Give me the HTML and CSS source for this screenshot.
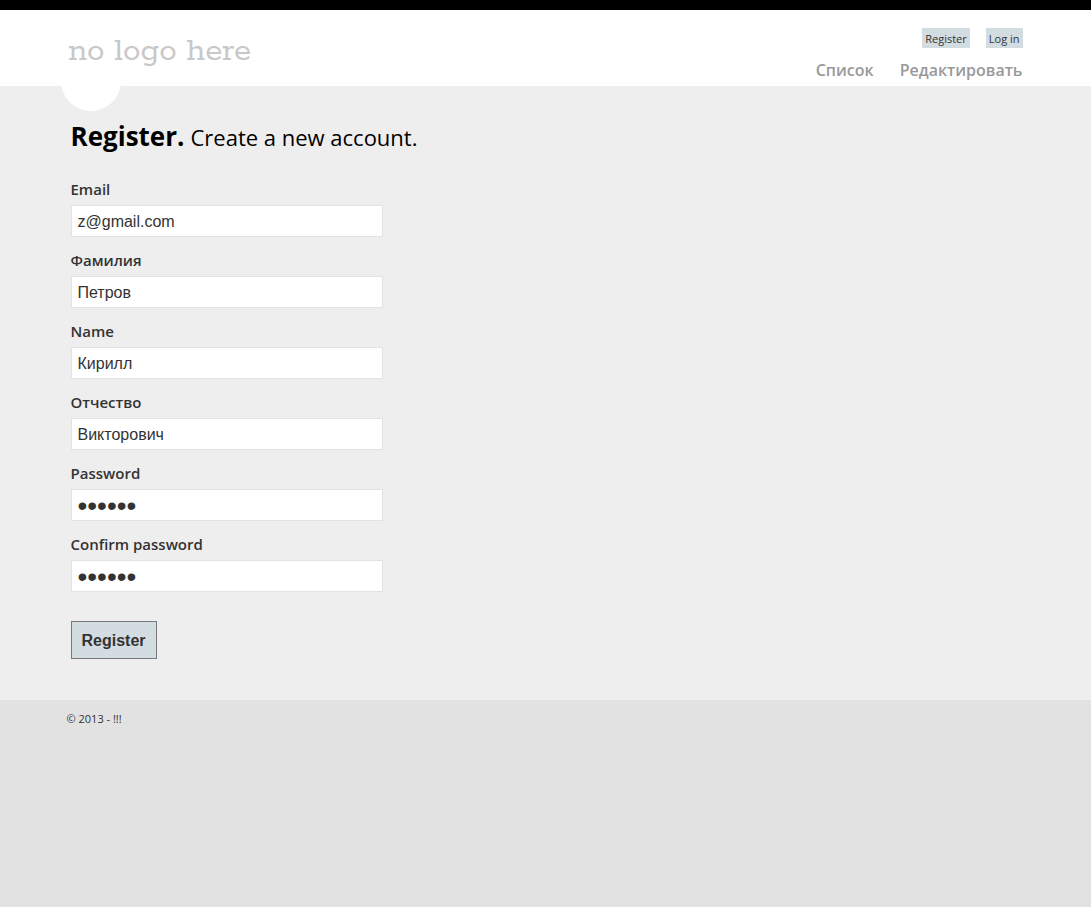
FILE: index.html
```html
<!DOCTYPE html>
<html lang="en">
<head>
<meta charset="utf-8">
<meta name="viewport" content="width=device-width, initial-scale=1">
<title>Register</title>
<link rel="stylesheet" href="styles.css">
</head>
<body>
<header class="site-header">
  <div class="wrapper header-row">
    <a class="logo" href="#">no logo here</a>
    <div class="header-side">
      <nav class="account" aria-label="Account">
        <a class="account-link" href="#">Register</a>
        <a class="account-link" href="#">Log in</a>
      </nav>
      <nav class="menu" aria-label="Main">
        <a class="menu-link" href="#">Список</a>
        <a class="menu-link" href="#">Редактировать</a>
      </nav>
    </div>
  </div>
</header>
<main class="main">
  <div class="wrapper">
    <div class="title">
      <h1 class="title-name">Register.</h1>
      <h2 class="title-note">Create a new account.</h2>
    </div>
    <form class="form">
      <div class="field">
        <label class="label" for="email">Email</label>
        <input class="input" id="email" type="text" value="z@gmail.com">
      </div>
      <div class="field">
        <label class="label" for="surname">Фамилия</label>
        <input class="input" id="surname" type="text" value="Петров">
      </div>
      <div class="field">
        <label class="label" for="name">Name</label>
        <input class="input" id="name" type="text" value="Кирилл">
      </div>
      <div class="field">
        <label class="label" for="patronymic">Отчество</label>
        <input class="input" id="patronymic" type="text" value="Викторович">
      </div>
      <div class="field">
        <label class="label" for="password">Password</label>
        <input class="input input-password" id="password" type="password" value="secret">
      </div>
      <div class="field">
        <label class="label" for="confirm">Confirm password</label>
        <input class="input input-password" id="confirm" type="password" value="secret">
      </div>
      <button class="submit" type="submit">Register</button>
    </form>
  </div>
</main>
<footer class="footer">
  <div class="wrapper"><p class="copyright">© 2013 - !!!</p></div>
</footer>
</body>
</html>
```

FILE: styles.css
```css
* {
  box-sizing: border-box;
}

body {
  margin: 0;
  border-top: 10px solid #000;
  background: #e2e2e2;
  color: #333;
  font-family: "Segoe UI", "Open Sans", "Noto Sans", sans-serif;
}

a {
  text-decoration: none;
}

.wrapper {
  max-width: 960px;
  margin: 0 auto;
}

.site-header {
  background: #fff;
}

.header-row {
  position: relative;
  display: flex;
  justify-content: space-between;
  padding: 18px 3px 4px;
}

/* Round tab that hangs below the header */
.header-row::after {
  content: "";
  position: absolute;
  left: -5px;
  bottom: -25px;
  width: 60px;
  height: 60px;
  border-radius: 50%;
  background: #fff;
}

.logo {
  position: relative;
  z-index: 1;
  padding-top: 5px;
  color: #c8c8c8;
  font-family: Rokkitt, "DejaVu Serif", serif;
  font-size: 35px;
  font-weight: 400;
  line-height: 36px;
}

.header-side {
  display: flex;
  flex-direction: column;
  align-items: flex-end;
  gap: 10px;
}

.account {
  display: flex;
  gap: 16px;
}

.account-link {
  padding: 1px 3px 0;
  background: #d3dce0;
  color: #333;
  font-size: 11px;
  line-height: 19px;
}

.menu {
  display: flex;
  gap: 26px;
}

.menu-link {
  color: #999;
  font-size: 16px;
  font-weight: 600;
  line-height: 24px;
}

.main {
  padding: 31px 5px 41px;
  background: #eee;
}

.title {
  display: flex;
  flex-wrap: wrap;
  align-items: baseline;
  gap: 6px;
  margin-bottom: 22px;
  padding-left: 5px;
  color: #000;
}

.title-name {
  margin: 0;
  font-size: 26px;
  font-weight: 700;
  line-height: 38px;
}

.title-note {
  margin: 0;
  font-size: 22px;
  font-weight: 400;
  line-height: 38px;
}

.form {
  padding-left: 5px;
}

.field {
  display: flex;
  flex-direction: column;
  gap: 4px;
  margin-bottom: 12px;
}

.label {
  align-self: flex-start;
  font-size: 15px;
  font-weight: 600;
  line-height: 23px;
}

.input {
  width: 100%;
  max-width: 312px;
  height: 32px;
  padding: 2px 6px 0;
  border: 1px solid #e2e2e2;
  border-radius: 0;
  background: #fff;
  color: #333;
  font-family: "Liberation Sans", Arial, sans-serif;
  font-size: 16px;
}

.input-password {
  font-size: 28px;
}

.submit {
  margin-top: 17px;
  padding: 9px 10px 7px;
  border: 1px solid #787878;
  border-radius: 0;
  background: #d3dce0;
  color: #333;
  font-family: "Liberation Sans", Arial, sans-serif;
  font-size: 16px;
  font-weight: 700;
  line-height: 20px;
}

.copyright {
  margin: 0;
  padding: 10px 1px;
  font-size: 11px;
  line-height: 18px;
}
```
